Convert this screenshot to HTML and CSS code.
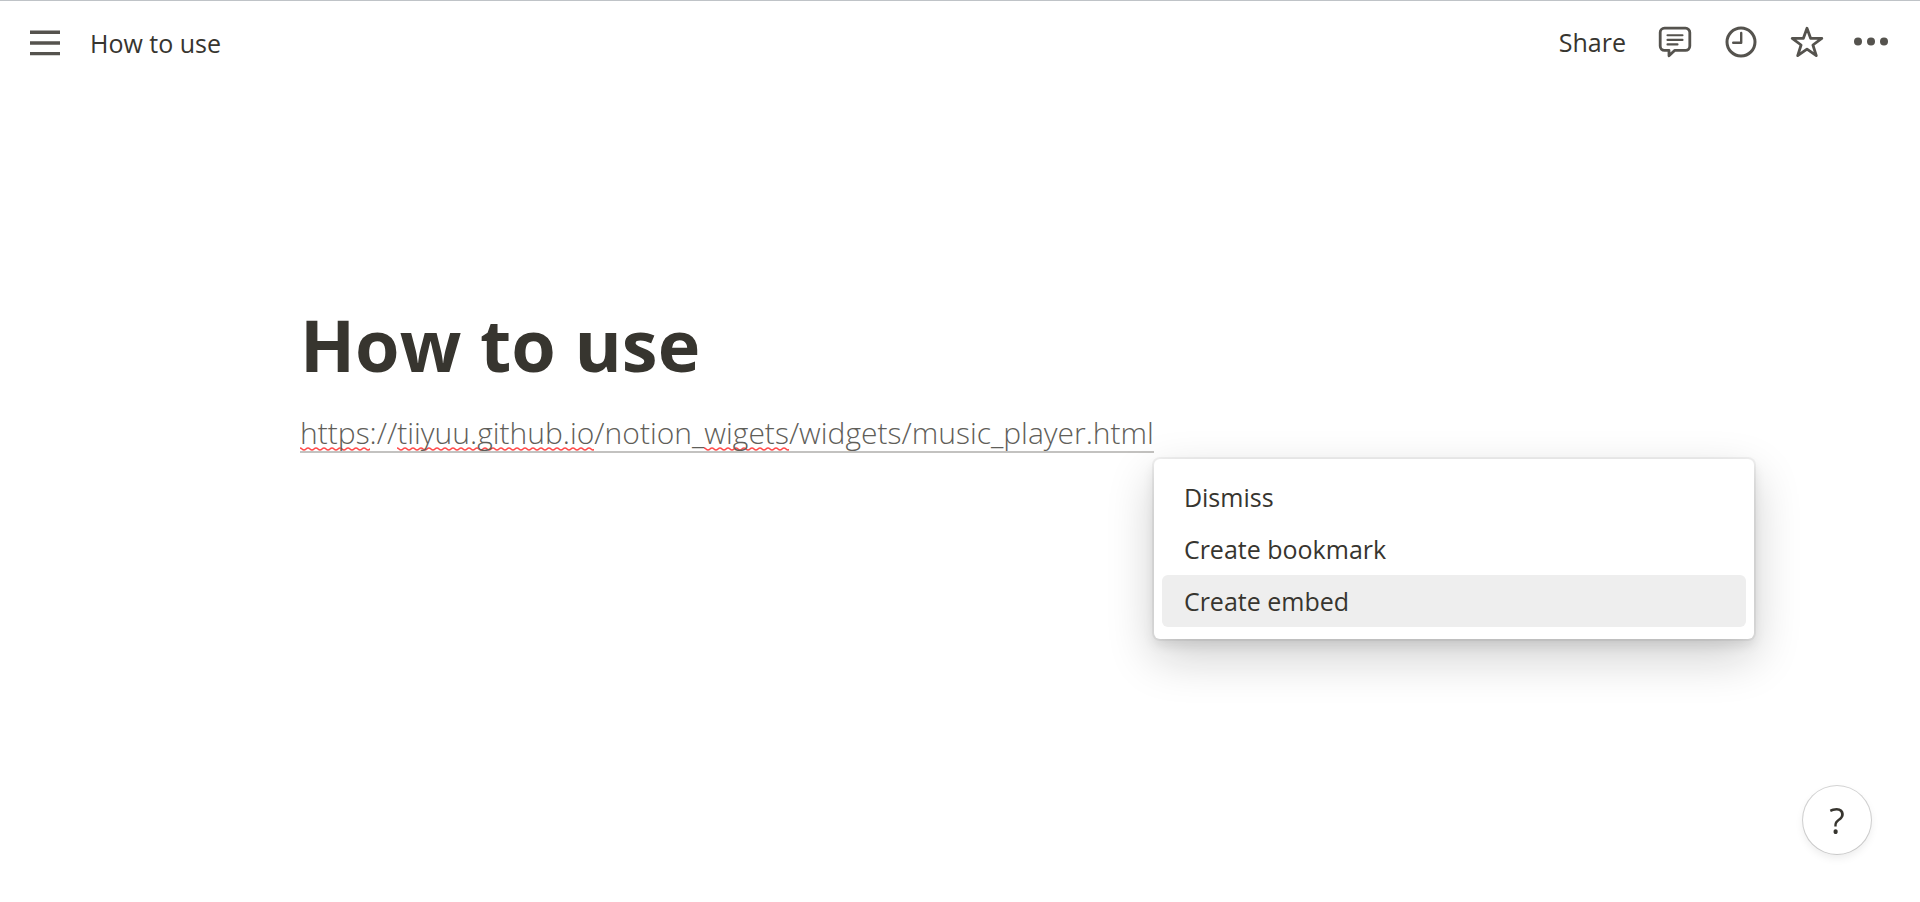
FILE: index.html
```
<!DOCTYPE html>
<html lang="en">
<head>
<meta charset="utf-8">
<meta name="viewport" content="width=device-width, initial-scale=1">
<title>How to use</title>
<link rel="stylesheet" href="styles.css">
</head>
<body>
<header class="topbar">
  <button class="icon-button" type="button" aria-label="Open sidebar">
    <svg width="30" height="26" viewBox="0 0 30 26"><path d="M0 2.2h30M0 13h30M0 23.6h30" fill="none" stroke="currentColor" stroke-width="3.4"/></svg>
  </button>
  <a class="breadcrumb" href="#">How to use</a>
  <nav class="actions" aria-label="Page actions">
    <button class="share" type="button">Share</button>
    <button class="icon-button" type="button" aria-label="Comments">
      <svg width="34" height="34" viewBox="0 0 34 34" fill="none" stroke="currentColor" stroke-linejoin="round"><path d="M6.5 3.2h21a4.3 4.3 0 0 1 4.3 4.3v13.6a4.3 4.3 0 0 1-4.3 4.3H16.600l-5.600 5.400v-5.400H6.500a4.300 4.300 0 0 1-4.300-4.300V7.500a4.300 4.300 0 0 1 4.300-4.300z" stroke-width="2.800"/><path d="M9.500 10.200h15M9.500 14.900h15M9.500 19.400h10" stroke-width="2.100" stroke-linecap="round"/></svg>
    </button>
    <button class="icon-button" type="button" aria-label="Updates">
      <svg width="34" height="34" viewBox="0 0 34 34" fill="none" stroke="currentColor"><circle cx="17" cy="17" r="14" stroke-width="3"/><path d="M17.200 8v9.700H9.200" stroke-width="2.400" stroke-linecap="round" stroke-linejoin="round"/></svg>
    </button>
    <button class="icon-button" type="button" aria-label="Favorite">
      <svg width="34" height="34" viewBox="0 0 34 34"><path d="M17 3.200l3.600 10.100h11.200l-8.900 6.700 3.400 10.600-9.300-6.500-9.300 6.500 3.400-10.600-8.900-6.700h11.200z" fill="none" stroke="currentColor" stroke-width="2.800" stroke-linejoin="round"/></svg>
    </button>
    <button class="icon-button" type="button" aria-label="More">
      <svg class="dots" width="34" height="34" viewBox="2 0 34 34" fill="currentColor"><circle cx="4" cy="16.500" r="4"/><circle cx="17" cy="16.500" r="4"/><circle cx="30" cy="16.500" r="4"/></svg>
    </button>
  </nav>
</header>
<main class="page">
  <h1 class="title">How to use</h1>
  <div class="block">
    <a class="link" href="#"><span class="misspelled">https</span>://<span class="misspelled">tiiyuu.github.io</span>/notion_<span class="misspelled">wigets</span>/widgets/music_player.html</a>
    <div class="menu" role="menu">
      <button class="menu-item" type="button" role="menuitem">Dismiss</button>
      <button class="menu-item" type="button" role="menuitem">Create bookmark</button>
      <button class="menu-item menu-item-active" type="button" role="menuitem">Create embed</button>
    </div>
  </div>
</main>
<button class="help" type="button" aria-label="Help">?</button>
</body>
</html>
```
FILE: styles.css
```
* { box-sizing: border-box; }

body {
  margin: 0;
  min-height: 100vh;
  background: #fff;
  color: #37352f;
  font-family: "Segoe UI", "Open Sans", "Noto Sans", sans-serif;
  font-size: 25px;
  border-top: 1px solid #bfc3c7;
}

button {
  margin: 0;
  padding: 0;
  border: 0;
  background: none;
  color: inherit;
  font: inherit;
  cursor: pointer;
}

.topbar {
  display: flex;
  align-items: center;
  height: 84px;
  padding: 0 30px;
}

.icon-button {
  display: flex;
  color: #55534e;
}

.dots { overflow: visible; }

.breadcrumb {
  margin-left: 30px;
  color: inherit;
  text-decoration: none;
}

.actions {
  display: flex;
  align-items: center;
  gap: 32px;
  margin-left: auto;
  padding-bottom: 2px;
}

.page {
  padding: 204px 166px 0 300px;
}

.title {
  margin: 0;
  font-size: 72px;
  line-height: 110px;
  font-weight: 700;
}

.block {
  position: relative;
  display: inline-block;
  margin-top: 16px;
}

.link {
  display: block;
  border-bottom: 2px solid #c3c2c0;
  color: #5f5e59;
  font-size: 30px;
  font-weight: 300;
  line-height: 36px;
  text-decoration: none;
}

.misspelled {
  background: url("data:image/svg+xml,%3Csvg xmlns='http://www.w3.org/2000/svg' width='8' height='4'%3E%3Cpath d='M-2 1Q0 -1 2 1T6 1T10 1' transform='translate(0 1)' fill='none' stroke='%23ff4a4a' stroke-width='1.6'/%3E%3C/svg%3E") left bottom 2px / 8px 4px repeat-x;
}

.menu {
  position: absolute;
  top: calc(100% + 6px);
  left: 100%;
  width: 600px;
  padding: 12px 8px;
  border-radius: 6px;
  background: #fff;
  box-shadow: 0 0 0 2px rgba(15, 15, 15, 0.05), 0 6px 12px rgba(15, 15, 15, 0.1), 0 18px 48px rgba(15, 15, 15, 0.2);
}

.menu-item {
  display: block;
  width: 100%;
  height: 52px;
  padding: 0 22px;
  border-radius: 6px;
  text-align: left;
}

.menu-item-active { background: #eee; }

.help {
  position: fixed;
  right: 49px;
  bottom: 48px;
  width: 68px;
  height: 68px;
  border-radius: 50%;
  background: #fff;
  font-size: 36px;
  box-shadow: 0 0 0 1px rgba(15, 15, 15, 0.18), 0 4px 8px rgba(15, 15, 15, 0.08);
}
```
